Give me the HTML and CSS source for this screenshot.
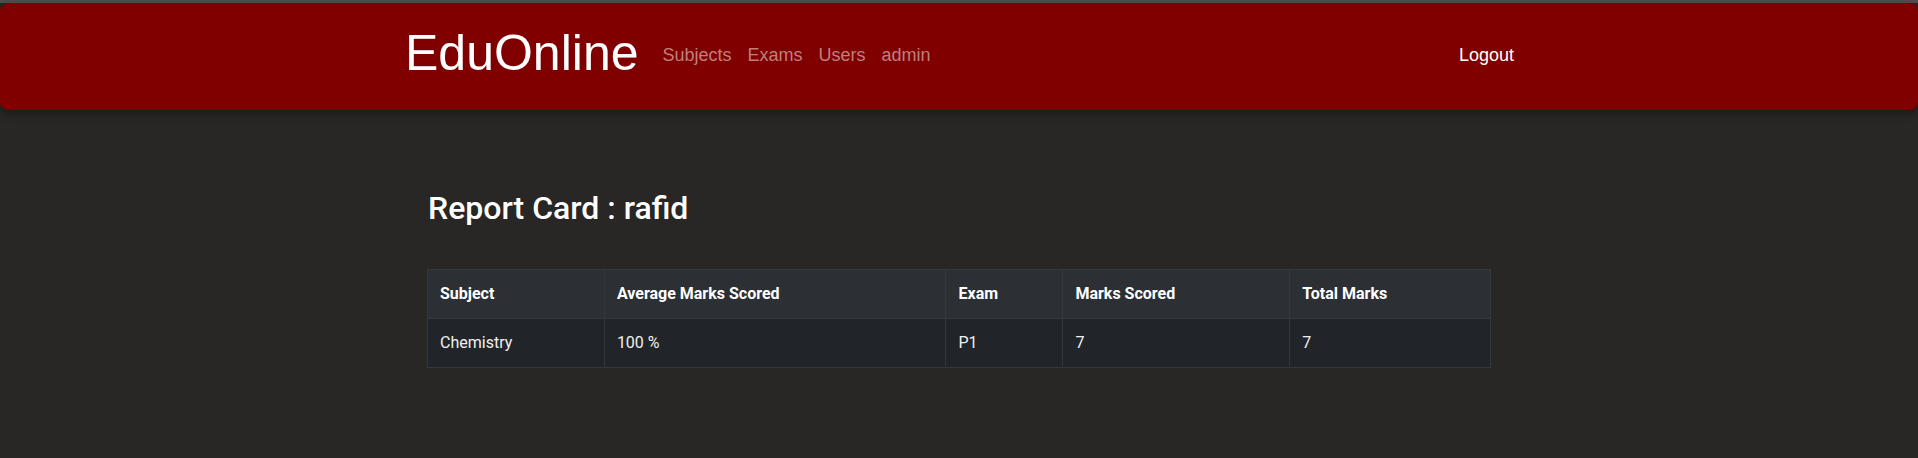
FILE: index.html
```html
<!DOCTYPE html>
<html lang="en">
<head>
<meta charset="utf-8">
<title>EduOnline - Report Card</title>
<link rel="stylesheet" href="styles.css">
</head>
<body>
<div class="topline"></div>
<nav class="navbar">
  <div class="nav-container">
    <a class="brand" href="#">EduOnline</a>
    <ul class="nav-links">
      <li><a href="#">Subjects</a></li>
      <li><a href="#">Exams</a></li>
      <li><a href="#">Users</a></li>
      <li><a href="#">admin</a></li>
    </ul>
    <a class="logout" href="#">Logout</a>
  </div>
</nav>
<main class="content">
  <h2 class="title">Report Card : rafid</h2>
  <table class="report">
    <colgroup>
      <col class="c1"><col class="c2"><col class="c3"><col class="c4"><col class="c5">
    </colgroup>
    <thead>
      <tr>
        <th>Subject</th>
        <th>Average Marks Scored</th>
        <th>Exam</th>
        <th>Marks Scored</th>
        <th>Total Marks</th>
      </tr>
    </thead>
    <tbody>
      <tr>
        <td>Chemistry</td>
        <td>100 %</td>
        <td>P1</td>
        <td>7</td>
        <td>7</td>
      </tr>
    </tbody>
  </table>
</main>
</body>
</html>
```

FILE: styles.css
```css
html, body {
  margin: 0;
  padding: 0;
}
body {
  background: #282725;
  font-family: Roboto, "Liberation Sans", Arial, sans-serif;
  color: #ffffff;
  height: 458px;
  overflow: hidden;
}
.topline {
  height: 3px;
  background: #4f4f4f;
}
.navbar {
  background: #800000;
  height: 107px;
  border-radius: 8px;
  box-shadow: 0 4px 8px rgba(0, 0, 0, 0.35);
}
.nav-container {
  width: 1110px;
  margin: 0 auto;
  height: 100%;
  display: flex;
  align-items: center;
  font-family: "Liberation Sans", Arial, sans-serif;
}
.brand {
  font-size: 50px;
  color: #ffffff;
  text-decoration: none;
  line-height: 1;
  margin-left: 1px;
  margin-right: 16px;
  margin-top: -8px;
}
.nav-links {
  list-style: none;
  display: flex;
  margin: 0;
  padding: 0;
  flex: 1;
  margin-top: -3px;
}
.nav-links a {
  display: block;
  padding: 0 8px;
  font-size: 18px;
  color: #bf7f7f;
  text-decoration: none;
}
.logout {
  font-size: 18px;
  color: #ffffff;
  text-decoration: none;
  margin-top: -3px;
}
.content {
  width: 1064px;
  margin: 0 auto;
  padding-top: 79px;
}
.title {
  margin: 0 0 42px 1px;
  font-size: 32px;
  font-weight: 500;
  line-height: 38px;
}
.report {
  width: 1064px;
  border-collapse: collapse;
  font-size: 16px;
}
.c1 { width: 177px; }
.c2 { width: 342px; }
.c3 { width: 117px; }
.c4 { width: 227px; }
.c5 { width: 201px; }
.report th,
.report td {
  border: 1px solid #34383d;
  padding: 12px;
  text-align: left;
  line-height: 24px;
  height: 24px;
}
.report th {
  background: #2c3035;
  font-weight: 700;
  font-size: 16px;
}
.report td {
  background: #212428;
  color: #f0f0f0;
}
```
